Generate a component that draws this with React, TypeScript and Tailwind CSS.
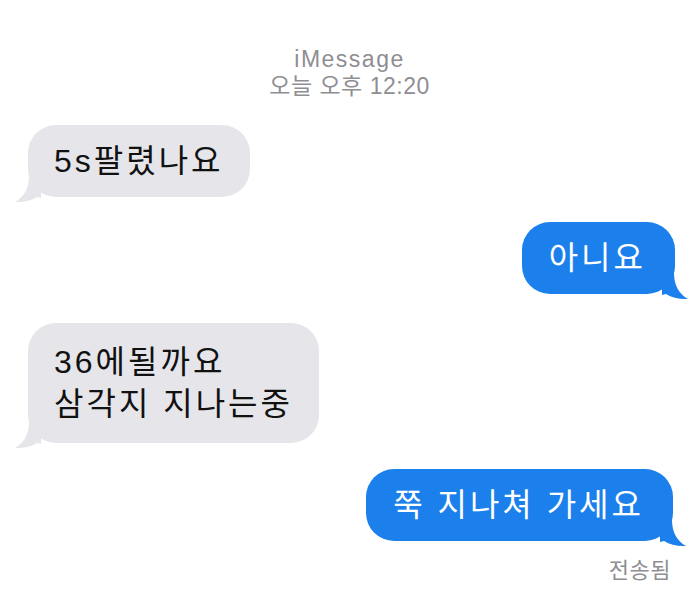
import React from 'react';

type Side = 'in' | 'out';

// iOS style tail drawn at the bottom corner of a bubble
const Tail: React.FC<{ side: Side }> = ({ side }) => (
  <svg
    width="27"
    height="27"
    viewBox="0 0 27 27"
    className={
      side === 'in'
        ? 'absolute left-[-14px] bottom-[-6px]'
        : 'absolute right-[-14px] bottom-[-6px] -scale-x-100'
    }
  >
    <path
      d="M15 0 C15 12 10 21 1 26 C9 26.5 17 25 23 21 L27 22 L27 0 Z"
      fill={side === 'in' ? '#e5e5ea' : '#1b80ec'}
    />
  </svg>
);

interface BubbleProps {
  side: Side;
  className?: string;
  children: React.ReactNode;
}

const Bubble: React.FC<BubbleProps> = ({ side, className = '', children }) => {
  const look =
    side === 'in'
      ? 'self-start bg-[#e5e5ea] text-[#111111] pl-[26px] pr-[26px]'
      : 'self-end bg-[#1b80ec] text-white pl-[27px] pr-[29px]';
  return (
    <div className={`relative rounded-[28px] ${look} ${className}`}>
      <Tail side={side} />
      <div className="relative text-[32px] leading-[42px] tracking-[3px]">{children}</div>
    </div>
  );
};

export default function App() {
  return (
    <div className="min-h-screen w-full bg-white font-['Liberation_Sans','Noto_Sans_CJK_KR',sans-serif]">
      <div className="flex flex-col items-center pt-[46px] text-[#8e8e93]">
        <div className="text-[23px] leading-[26px] tracking-[1.5px]">iMessage</div>
        <div className="text-[23px] leading-[28px] tracking-[0.5px]">오늘 오후 12:20</div>
      </div>

      <div className="flex flex-col pt-[25px]">
        <Bubble side="in" className="ml-[28px] py-[15px]">
          5s팔렸나요
        </Bubble>

        <Bubble side="out" className="mr-[24px] mt-[25px] py-[15px]">
          아니요
        </Bubble>

        <Bubble side="in" className="ml-[28px] mt-[29px] py-[18px]">
          <div>36에될까요</div>
          <div>삼각지 지나는중</div>
        </Bubble>

        <Bubble side="out" className="mr-[26px] mt-[26px] py-[15px]">
          쭉 지나쳐 가세요
        </Bubble>

        <div className="self-end mr-[28px] mt-[18px] text-[22px] leading-[24px] tracking-[0.5px] text-[#8e8e93]">
          전송됨
        </div>
      </div>
    </div>
  );
}
